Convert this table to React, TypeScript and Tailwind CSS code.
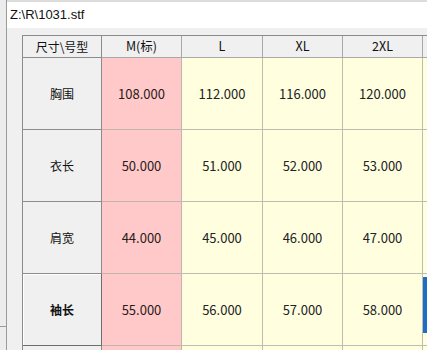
const sizes = ["M(标)", "L", "XL", "2XL", ""];

const rows = [
  { name: "胸围", values: ["108.000", "112.000", "116.000", "120.000"] },
  { name: "衣长", values: ["50.000", "51.000", "52.000", "53.000"] },
  { name: "肩宽", values: ["44.000", "45.000", "46.000", "47.000"] },
  { name: "袖长", values: ["55.000", "56.000", "57.000", "58.000"], active: true },
  { name: "", values: ["", "", "", ""] },
];

const font = { fontFamily: '"Noto Sans CJK SC", "Noto Sans", sans-serif' };

function HeaderRow() {
  return (
    <>
      <div className="h-[22px] flex items-center justify-center bg-[#f0f0f0] border-r border-b border-[#8c8c8c] text-[12px] text-[#111]">
        尺寸\号型
      </div>
      {sizes.map((s, i) => (
        <div
          key={i}
          className="h-[22px] flex items-center justify-center bg-[#f0f0f0] border-r border-b border-[#a8a8a8] text-[12.5px] text-[#111]"
        >
          {s}
        </div>
      ))}
    </>
  );
}

function DataRow({ name, values, active }: { name: string; values: string[]; active?: boolean }) {
  return (
    <>
      <div
        className={
          active
            ? "h-[72px] flex items-center justify-center bg-[#f0f0f0] border-r border-b border-[#6e6e6e] shadow-[inset_1px_1px_0_#ffffff,inset_0_1px_0_#6e6e6e] text-[12px] font-bold text-[#111]"
            : "h-[72px] flex items-center justify-center bg-[#f0f0f0] border-r border-b border-[#8c8c8c] text-[12px] text-[#111]"
        }
      >
        {name}
      </div>
      <div className="h-[72px] flex items-center justify-center bg-[#ffc9c9] border-r border-b border-[#c4b4b0] text-[13px] text-[#2a1a1a]">
        {values[0]}
      </div>
      {values.slice(1).map((v, i) => (
        <div
          key={i}
          className="h-[72px] flex items-center justify-center bg-[#ffffe0] border-r border-b border-[#bdbdb0] text-[13px] text-[#222]"
        >
          {v}
        </div>
      ))}
      <div className="h-[72px] flex items-start bg-[#ffffe0] border-r border-b border-[#bdbdb0]">
        {active && <div className="mt-[3px] w-[5px] h-[56px] bg-[#1c6fc4]" />}
      </div>
    </>
  );
}

export default function App() {
  return (
    <div className="w-[427px] h-[350px] overflow-hidden flex bg-[#f0f0f0]" style={font}>
      <div className="w-[6px] shrink-0 flex flex-col bg-[#ececec]">
        <div className="h-[326px] shrink-0" />
        <div className="h-px shrink-0 bg-[#9a9a9a]" />
      </div>

      <div className="flex-1 flex flex-col border-l border-[#9a9a9a] min-w-0">
        <div className="h-[2px] shrink-0 bg-[#dcdcdc]" />
        <div
          className="h-[26px] shrink-0 bg-white flex items-center pl-[3px] text-[13px] text-[#111]"
          style={{ fontFamily: '"Liberation Sans", "Noto Sans CJK SC", sans-serif' }}
        >
          Z:\R\1031.stf
        </div>

        <div className="flex-1 pl-[15px] pt-[7px] bg-[#f0f0f0]">
          <div className="grid grid-cols-[79px_80px_81px_80px_80px_80px] border-l border-t border-[#8c8c8c] w-max">
            <HeaderRow />
            {rows.map((r, i) => (
              <DataRow key={i} name={r.name} values={r.values} active={r.active} />
            ))}
          </div>
        </div>
      </div>
    </div>
  );
}
